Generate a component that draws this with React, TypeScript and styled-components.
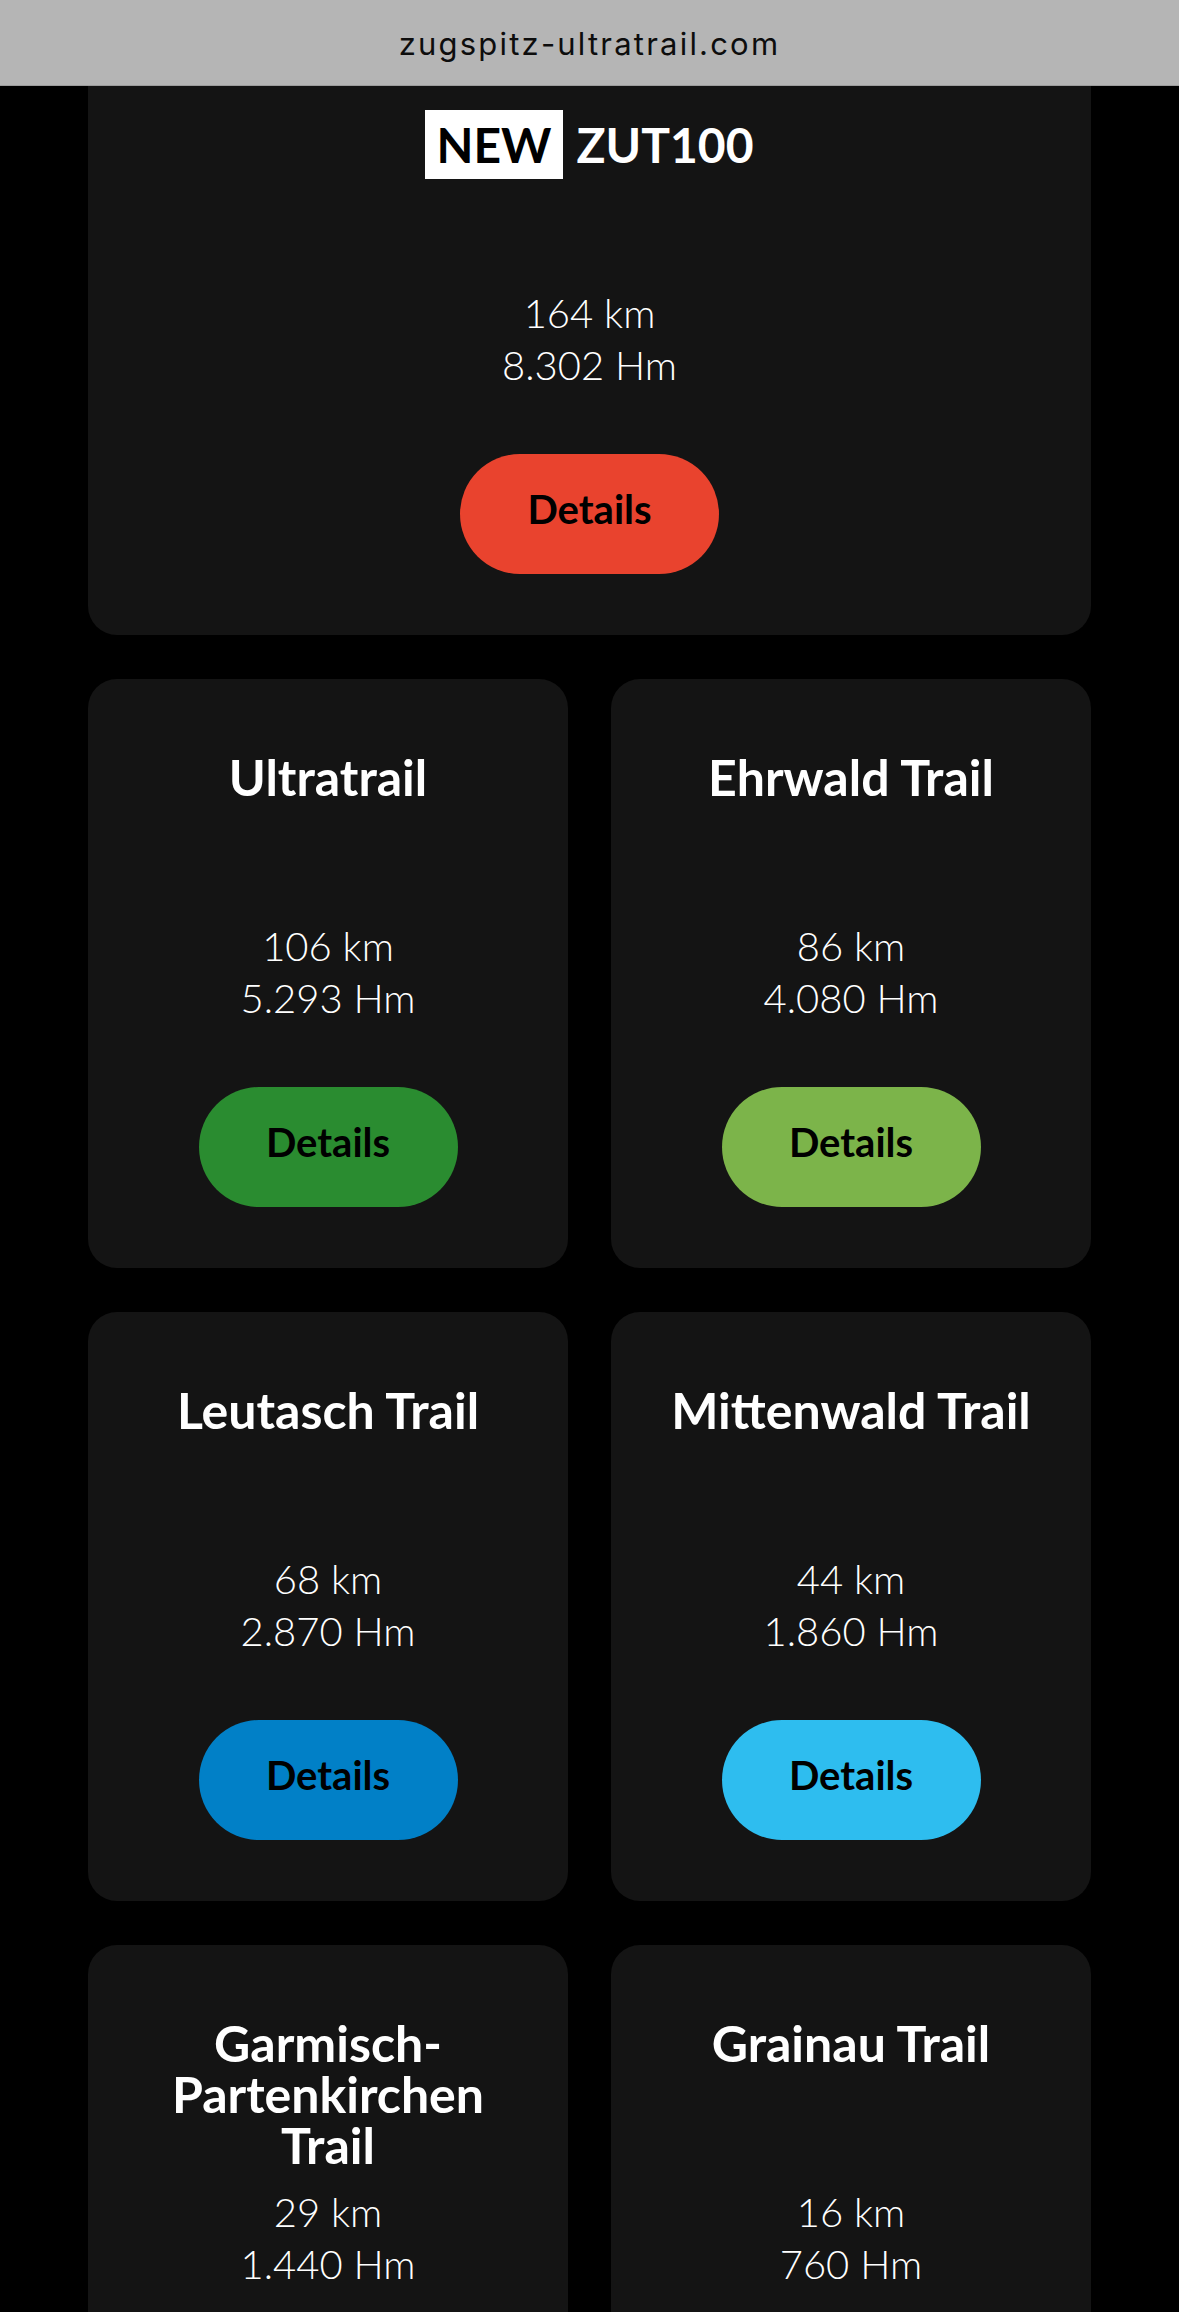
import React from "react";
import styled, { createGlobalStyle } from "styled-components";

const GlobalStyle = createGlobalStyle`
  html, body {
    margin: 0;
    padding: 0;
    background: #000;
  }
  body {
    font-family: Lato, "Noto Sans", sans-serif;
    -webkit-font-smoothing: antialiased;
  }
`;

const AddressBar = styled.header`
  position: fixed;
  top: 0;
  left: 0;
  right: 0;
  height: 85px;
  background: #b5b5b5;
  border-bottom: 1px solid #9c9c9c;
  display: flex;
  align-items: center;
  justify-content: center;
  z-index: 10;
`;

const Url = styled.span`
  font-family: Inter, "Liberation Sans", sans-serif;
  font-size: 31px;
  letter-spacing: 2.2px;
  color: #0d0d0d;
  margin-top: 2px;
`;

const Grid = styled.main`
  display: grid;
  grid-template-columns: 1fr 1fr;
  column-gap: 43px;
  row-gap: 44px;
  padding: 46px 88px 0;
`;

const Card = styled.section<{ $wide?: boolean }>`
  grid-column: ${(p) => (p.$wide ? "1 / -1" : "auto")};
  background: #141414;
  border-radius: 29px;
  display: flex;
  flex-direction: column;
  align-items: center;
  text-align: center;
  padding: 73px 24px 61px;
  box-sizing: border-box;
  height: 589px;
`;

const Title = styled.h2`
  margin: 0;
  min-height: 168px;
  max-width: 400px;
  font-family: Lato, "Noto Sans", sans-serif;
  font-weight: 700;
  font-size: 50px;
  line-height: 51px;
  color: #fff;
`;

const FeatureTitle = styled(Title)`
  display: flex;
  align-items: flex-start;
  justify-content: center;
  gap: 14px;
  max-width: none;
  font-size: 48px;
`;

const NewBadge = styled.span`
  display: inline-block;
  background: #fff;
  color: #000;
  padding: 9px 11px;
  margin: -9px 0;
`;

const Stats = styled.p`
  margin: 0;
  font-family: Lato, "Noto Sans", sans-serif;
  font-weight: 300;
  font-size: 40px;
  line-height: 52px;
  color: #fff;
`;

const DetailsButton = styled.a<{ $color: string }>`
  margin-top: 63px;
  width: 259px;
  height: 120px;
  flex-shrink: 0;
  border-radius: 60px;
  background: ${(p) => p.$color};
  color: #000;
  display: flex;
  align-items: center;
  justify-content: center;
  font-family: Lato, "Noto Sans", sans-serif;
  font-weight: 700;
  font-size: 40px;
  text-decoration: none;
  padding-bottom: 10px;
  box-sizing: border-box;
`;

type Race = { name: string; km: string; hm: string; color: string };

const races: Race[] = [
  { name: "Ultratrail", km: "106 km", hm: "5.293 Hm", color: "#2a8c30" },
  { name: "Ehrwald Trail", km: "86 km", hm: "4.080 Hm", color: "#7cb44a" },
  { name: "Leutasch Trail", km: "68 km", hm: "2.870 Hm", color: "#0180c7" },
  { name: "Mittenwald Trail", km: "44 km", hm: "1.860 Hm", color: "#2ebdef" },
  { name: "Garmisch-Partenkirchen Trail", km: "29 km", hm: "1.440 Hm", color: "#f4a51f" },
  { name: "Grainau Trail", km: "16 km", hm: "760 Hm", color: "#8c4fa0" },
];

export default function App() {
  return (
    <>
      <GlobalStyle />
      <AddressBar>
        <Url>zugspitz-ultratrail.com</Url>
      </AddressBar>
      <Grid>
        <Card $wide>
          <FeatureTitle>
            <NewBadge>NEW</NewBadge>
            <span>ZUT100</span>
          </FeatureTitle>
          <Stats>
            164 km
            <br />
            8.302 Hm
          </Stats>
          <DetailsButton href="#" $color="#e9432e">
            Details
          </DetailsButton>
        </Card>
        {races.map((r) => (
          <Card key={r.name}>
            <Title>{r.name}</Title>
            <Stats>
              {r.km}
              <br />
              {r.hm}
            </Stats>
            <DetailsButton href="#" $color={r.color}>
              Details
            </DetailsButton>
          </Card>
        ))}
      </Grid>
    </>
  );
}
